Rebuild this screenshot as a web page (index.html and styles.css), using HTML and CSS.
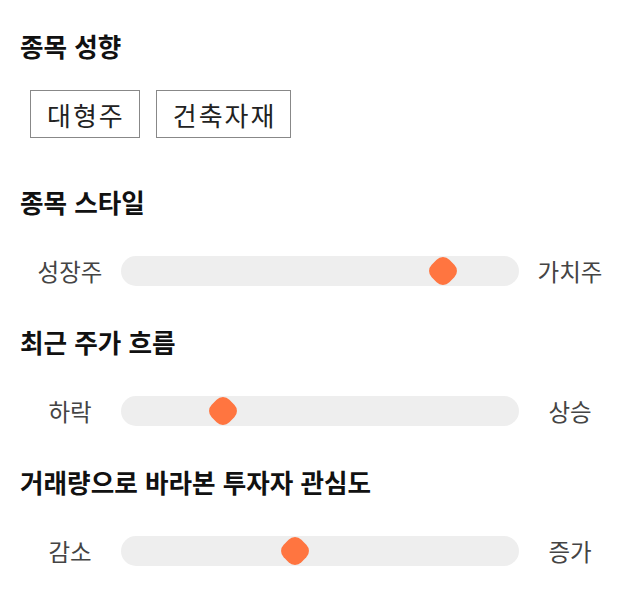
FILE: index.html
```html
<!DOCTYPE html>
<html lang="ko">
<head>
<meta charset="utf-8">
<link rel="stylesheet" href="styles.css">
</head>
<body>
<main class="panel">
  <section class="section section-tags">
    <h2 class="title">종목 성향</h2>
    <div class="tags">
      <span class="tag">대형주</span>
      <span class="tag">건축자재</span>
    </div>
  </section>
  <section class="section">
    <h2 class="title">종목 스타일</h2>
    <div class="slider-row">
      <span class="label">성장주</span>
      <div class="track"><span class="thumb" style="left: 81%"></span></div>
      <span class="label">가치주</span>
    </div>
  </section>
  <section class="section">
    <h2 class="title">최근 주가 흐름</h2>
    <div class="slider-row">
      <span class="label">하락</span>
      <div class="track"><span class="thumb" style="left: 25.6%"></span></div>
      <span class="label">상승</span>
    </div>
  </section>
  <section class="section">
    <h2 class="title">거래량으로 바라본 투자자 관심도</h2>
    <div class="slider-row">
      <span class="label">감소</span>
      <div class="track"><span class="thumb" style="left: 43.6%"></span></div>
      <span class="label">증가</span>
    </div>
  </section>
</main>
</body>
</html>
```
FILE: styles.css
```css
* { box-sizing: border-box; }
html, body { margin: 0; padding: 0; background: #fff; }
body {
  font-family: "Noto Sans CJK KR", "Noto Sans", sans-serif;
  color: #222;
}
.panel {
  width: 640px;
  padding: 30px 20px 0;
  display: flex;
  flex-direction: column;
  gap: 30px;
}
.section {
  display: flex;
  flex-direction: column;
  gap: 28px;
}
.section-tags { margin-bottom: 18px; }
.title {
  margin: 0;
  font-size: 25.6px;
  line-height: 32px;
  font-weight: 700;
  color: #111;
}
.tags {
  display: flex;
  gap: 16px;
  padding-left: 10px;
}
.tag {
  display: flex;
  align-items: center;
  justify-content: center;
  height: 48px;
  padding: 0 14px 0 16px;
  border: 1px solid #888;
  font-size: 26px;
  letter-spacing: 2px;
  color: #222;
}
.slider-row {
  display: grid;
  grid-template-columns: 100px 1fr 100px;
  align-items: center;
  height: 50px;
}
.label {
  text-align: center;
  font-size: 23.5px;
  color: #444;
}
.track {
  position: relative;
  height: 30px;
  background: #eeeeee;
  border-radius: 15px;
  margin: 0 1px;
}
.thumb {
  position: absolute;
  top: 50%;
  width: 25px;
  height: 25px;
  background: #ff7540;
  border-radius: 9px;
  transform: translate(-50%, -50%) rotate(45deg);
}
```
